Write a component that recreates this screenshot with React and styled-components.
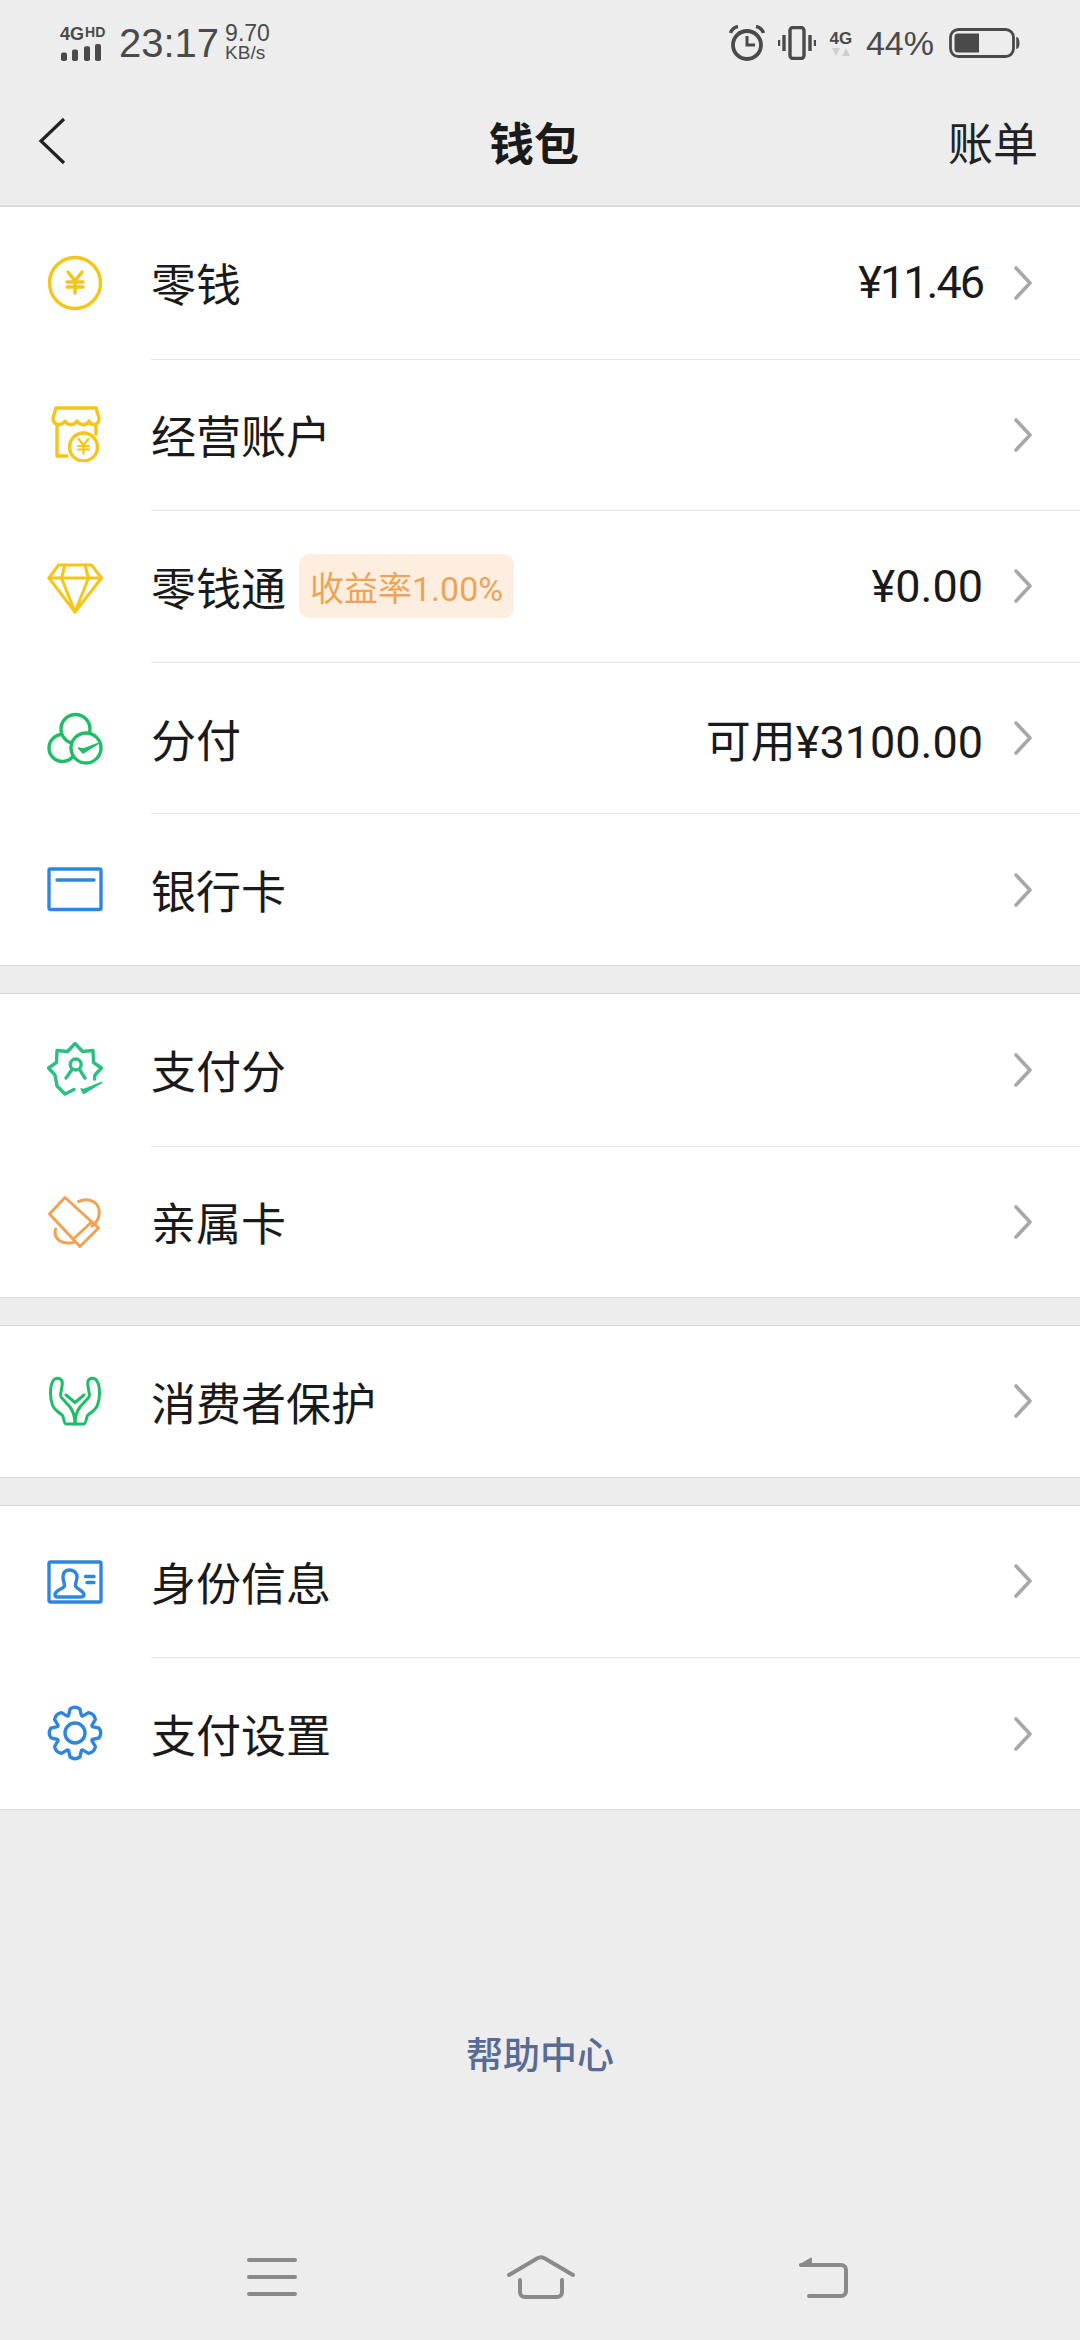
import React from 'react';
import styled, { createGlobalStyle } from 'styled-components';

const GlobalStyle = createGlobalStyle`
	html, body { margin: 0; padding: 0; background: #ededed; }
	body { font-family: 'Noto Sans CJK SC', 'Noto Sans', sans-serif; }
`;

const YELLOW = '#f5c518';
const GREEN = '#1fbd68';
const TEAL = '#2bc082';
const BLUE = '#2f86dc';
const ORANGE = '#f2a250';

const gearPath = () => {
	const teeth = 8;
	const cx = 28;
	const cy = 28;
	let d = '';
	for (let i = 0; i < teeth; i++) {
		const a = (i * Math.PI * 2) / teeth - Math.PI / 2;
		const pt = (r, off) => {
			const x = cx + r * Math.cos(a + off);
			const y = cy + r * Math.sin(a + off);
			return `${x.toFixed(1)} ${y.toFixed(1)}`;
		};
		d += `${i === 0 ? 'M' : 'L'}${pt(18.5, -0.36)} L${pt(24.5, -0.2)} Q${pt(27.5, 0)} ${pt(24.5, 0.2)} L${pt(18.5, 0.36)} `;
	}
	return d + 'Z';
};

const Icon = ({ color, stroke = 3.4, children }) => (
	<IconBox viewBox='0 0 56 56' fill='none' stroke={color} strokeWidth={stroke} strokeLinecap='round' strokeLinejoin='round'>
		{children}
	</IconBox>
);

const YenMark = ({ x, y, s = 1, w }) => (
	<path strokeWidth={w} d={`M${x - 7 * s} ${y - 10 * s} L${x} ${y - 1 * s} L${x + 7 * s} ${y - 10 * s} M${x - 8 * s} ${y} H${x + 8 * s} M${x - 8 * s} ${y + 5 * s} H${x + 8 * s} M${x} ${y} V${y + 11 * s}`} />
);

const icons = {
	coin: (
		<Icon color={YELLOW}>
			<circle cx='28' cy='28' r='25.5' />
			<YenMark x={28} y={27} />
		</Icon>
	),
	shop: (
		<Icon color={YELLOW}>
			<path d='M9 2 H49 L52 12 C52 20 44 20 42 15 C40 20 33 20 30 15 C27 20 21 20 18 15 C15 20 6 20 6 12 Z' />
			<path d='M10 20 V50 H20' />
			<path d='M49 19 V28' />
			<circle cx='36.5' cy='41' r='14' />
			<YenMark x={36.5} y={40} s={0.7} w={2.2} />
		</Icon>
	),
	diamond: (
		<Icon color={YELLOW} stroke={3}>
			<path d='M11.5 7 H44.5 L54.5 20 L28 54 L2 20 Z' />
			<path d='M2 20 H54.5 M18 7 L14.5 20 L28 54 L41.5 20 L38 7' />
		</Icon>
	),
	circles: (
		<Icon color={GREEN}>
			<circle cx='15.5' cy='38' r='13.5' fill='#fff' />
			<circle cx='28.5' cy='19' r='14.5' fill='#fff' />
			<circle cx='39' cy='38' r='15' fill='#fff' />
			<path d='M31.5 38 L36 43 L51 33.5 L36.5 39 Z' fill={GREEN} strokeWidth='1.5' />
		</Icon>
	),
	card: (
		<Icon color={BLUE}>
			<rect x='2' y='8' width='52' height='40.5' rx='1.5' />
			<path d='M10 19 H47' />
		</Icon>
	),
	badge: (
		<Icon color={TEAL}>
			<path d='M27 47.5 L18 52 L10 44 L8 33 L1.5 26 L9.5 20.5 L10 8.5 L20.5 9.5 L28 1.5 L35.5 9.5 L46 8.5 L46.5 20.5 L54.5 26 L48 33 L47.5 37' />
			<circle cx='28.7' cy='22.5' r='5.5' />
			<path d='M19 36 L25 27.5 M38 36 L32.5 27.5' />
			<path d='M34 47 L36.5 51.5 L54.5 40.5 L37 47.5 Z' fill={TEAL} strokeWidth='1.5' />
		</Icon>
	),
	family: (
		<Icon color={ORANGE} stroke={3}>
			<path d='M18 4.5 L2.5 21 L33 53.5 L51.5 35 Z' />
			<path d='M28 44.5 L44.5 29' />
			<path d='M31.5 8.5 C42 4 54 9 52 22 C51.5 26 49 30 45 33' />
			<path d='M8.5 36 C6 46 15 52 26.5 49.5' />
		</Icon>
	),
	hands: (
		<Icon color={GREEN} stroke={3}>
			<path d='M28 51 H19 C17 51 17 46 15.7 42.7 C12 39 7 37 5.5 32 C3 26 2.5 14 6 8 C8 4.5 13 4 15 8 C16 11 14.5 15 14 19 C13.5 21 13 22.5 14 24 L23 34 C26 38 28 43 28 51 Z' />
			<path d='M28 51 H37 C39 51 39 46 40.3 42.7 C44 39 49 37 50.5 32 C53 26 53.5 14 50 8 C48 4.5 43 4 41 8 C40 11 41.5 15 42 19 C42.5 21 43 22.5 42 24 L33 34 C30 38 28 43 28 51 Z' />
			<path d='M19 22 L28 29.5 L37 22' />
		</Icon>
	),
	idcard: (
		<Icon color={BLUE}>
			<rect x='2' y='9' width='52' height='40' rx='1.5' />
			<path d='M23 17 C18 17 16 20 16 24 C16 29 18 30 17.5 33 C15 37 8 37 8 42 C8 43.5 9 44 11 44 H33 C36 44 37 43.5 37 42 C37 37 30 37 28.5 33 C28 30 30 28 30 24 C30 20 27 17 23 17 Z' />
			<path d='M38.5 23.5 H47 M40 29.5 H47' />
		</Icon>
	),
	gear: (
		<Icon color={BLUE}>
			<path d={gearPath()} />
			<circle cx='28' cy='28' r='10' />
		</Icon>
	),
};

const Chevron = () => (
	<ChevronIcon viewBox='0 0 20 34' fill='none' stroke='#a8a8a8' strokeWidth='3.6' strokeLinecap='round' strokeLinejoin='round'>
		<path d='M3 2 L17 17 L3 32' />
	</ChevronIcon>
);

const sections = [
	[
		{ icon: 'coin', label: '零钱', value: '¥11.46', tight: true },
		{ icon: 'shop', label: '经营账户' },
		{ icon: 'diamond', label: '零钱通', tag: '收益率1.00%', value: '¥0.00' },
		{ icon: 'circles', label: '分付', value: '可用¥3100.00' },
		{ icon: 'card', label: '银行卡' },
	],
	[
		{ icon: 'badge', label: '支付分' },
		{ icon: 'family', label: '亲属卡' },
	],
	[{ icon: 'hands', label: '消费者保护' }],
	[
		{ icon: 'idcard', label: '身份信息' },
		{ icon: 'gear', label: '支付设置' },
	],
];

const App = () => (
	<Page>
		<GlobalStyle />
		<StatusBar>
			<StatusGroup>
				<SignalBlock>
					<NetworkLabel>4G<small>HD</small></NetworkLabel>
					<svg width='42' height='17' viewBox='0 0 42 20' preserveAspectRatio='none' fill='#4a4a4a'>
						<rect x='1' y='10' width='6' height='10' rx='2' />
						<rect x='12' y='6.5' width='6' height='13.5' rx='2' />
						<rect x='24' y='2.5' width='6' height='17.5' rx='2' />
						<rect x='35' y='0' width='6' height='20' rx='2' />
					</svg>
				</SignalBlock>
				<Time>23:17</Time>
				<Speed>
					<span>9.70</span>
					<small>KB/s</small>
				</Speed>
			</StatusGroup>
			<StatusGroup>
				<svg width='36' height='36' viewBox='0 0 36 36' fill='none' stroke='#4a4a4a' strokeWidth='3.8'>
					<circle cx='18' cy='20' r='14' />
					<path d='M18 11 V20 H26' strokeWidth='3' />
					<path d='M1.5 8 C3 4 6 2 9 1.5 M34.5 8 C33 4 30 2 27 1.5' strokeWidth='3.4' />
				</svg>
				<VibrateIcon width='38' height='34' viewBox='0 0 38 34' fill='none' stroke='#4a4a4a'>
					<rect x='12' y='1.5' width='14' height='31' rx='3' strokeWidth='3.4' />
					<path d='M6 9 V25 M32 9 V25' strokeWidth='3.4' />
					<path d='M1 14 V20 M37 14 V20' strokeWidth='2.4' />
				</VibrateIcon>
				<MobileData>
					<span>4G</span>
					<svg width='18' height='9' viewBox='0 0 18 9' fill='#cfcfcf'>
						<path d='M0 0 H8 L4 8 Z M10 8 H18 L14 0 Z' />
					</svg>
				</MobileData>
				<Battery>44%</Battery>
				<svg width='71' height='30' viewBox='0 0 71 30' fill='none'>
					<rect x='1.5' y='1.5' width='63' height='27' rx='8' stroke='#4a4a4a' strokeWidth='2.8' />
					<path d='M9 5.5 H30 V24.5 H9 C6.5 24.5 5.5 23.5 5.5 21 V9 C5.5 6.5 6.5 5.5 9 5.5 Z' fill='#4a4a4a' />
					<path d='M68 10 C70 11 70.5 19 68 20 Z' fill='#4a4a4a' stroke='#4a4a4a' strokeWidth='1.5' />
				</svg>
			</StatusGroup>
		</StatusBar>
		<NavBar>
			<svg width='30' height='48' viewBox='0 0 30 48' fill='none' stroke='#222' strokeWidth='3.2'>
				<path d='M26 2 L3 24 L26 46' />
			</svg>
			<NavTitle>钱包</NavTitle>
			<NavAction>账单</NavAction>
		</NavBar>
		{sections.map((rows, i) => (
			<Section key={i}>
				{rows.map(row => (
					<Row key={row.label}>
						{icons[row.icon]}
						<RowBody>
							<Label>{row.label}</Label>
							{row.tag && <Tag>{row.tag}</Tag>}
							{row.value && <Value $tight={row.tight}>{row.value}</Value>}
							<Chevron />
						</RowBody>
					</Row>
				))}
			</Section>
		))}
		<Footer>
			<HelpLink>帮助中心</HelpLink>
		</Footer>
		<SoftKeys>
			<svg width='52' height='40' viewBox='0 0 52 40' fill='none' stroke='#8a8a8a' strokeWidth='4' strokeLinecap='round'>
				<path d='M3 3 H49 M3 20 H49 M3 37 H49' />
			</svg>
			<svg width='70' height='44' viewBox='0 0 70 44' fill='none' stroke='#8a8a8a' strokeWidth='4' strokeLinecap='round' strokeLinejoin='round'>
				<path d='M3 20 L31 3.5 C33.5 2 36.5 2 39 3.5 L67 20' />
				<path d='M14 25 V37 C14 40 16 42 19 42 H51 C54 42 56 40 56 37 V25' />
			</svg>
			<svg width='52' height='42' viewBox='0 0 52 42' fill='none' stroke='#8a8a8a' strokeWidth='4' strokeLinecap='round' strokeLinejoin='round'>
				<path d='M4 9 H44 C47 9 49 11 49 14 V35 C49 38 47 40 44 40 H12' />
				<path d='M3 9 L14 2.5 V9 Z' fill='#8a8a8a' strokeWidth='2' />
			</svg>
		</SoftKeys>
	</Page>
);

const Page = styled.div`
	width: 1080px;
	height: 2340px;
	display: flex;
	flex-direction: column;
	background: #ededed;
	overflow: hidden;
`;
const StatusBar = styled.div`
	height: 84px;
	box-sizing: border-box;
	padding: 2px 60px 0 60px;
	display: flex;
	align-items: center;
	justify-content: space-between;
	color: #4a4a4a;
	font-family: 'Liberation Sans', sans-serif;
`;
const StatusGroup = styled.div`
	display: flex;
	align-items: center;
`;
const SignalBlock = styled.div`
	display: flex;
	flex-direction: column;
	width: 46px;
	margin-right: 13px;
`;
const NetworkLabel = styled.div`
	font-size: 18px;
	line-height: 15px;
	margin-bottom: 2px;
	font-weight: 700;
	white-space: nowrap;
	small {
		font-size: 14px;
		vertical-align: 3px;
		margin-left: 1px;
	}
`;
const Time = styled.span`
	font-size: 40px;
	line-height: 44px;
`;
const Speed = styled.div`
	display: flex;
	flex-direction: column;
	margin-left: 6px;
	font-size: 23px;
	line-height: 19px;
	small {
		font-size: 19px;
	}
`;
const VibrateIcon = styled.svg`
	margin: 0 13px;
`;
const MobileData = styled.div`
	width: 24px;
	display: flex;
	flex-direction: column;
	align-items: center;
	font-size: 17px;
	line-height: 18px;
	font-weight: 700;
	margin-right: 13px;
`;
const Battery = styled.span`
	font-size: 34px;
	margin-right: 15px;
`;
const NavBar = styled.div`
	height: 123px;
	box-sizing: border-box;
	padding: 0 42px 7px 38px;
	display: grid;
	grid-template-columns: 451px auto 1fr;
	align-items: center;
	border-bottom: 2px solid #dcdcdc;
`;
const NavTitle = styled.div`
	font-size: 45px;
	font-weight: 700;
	color: #1a1a1a;
`;
const NavAction = styled.div`
	font-size: 45px;
	color: #222;
	text-align: right;
`;
const Section = styled.div`
	background: #fff;
	border-bottom: 1px solid #d9d9d9;
	& + & {
		margin-top: 27px;
		border-top: 1px solid #d9d9d9;
	}
`;
const Row = styled.div`
	height: 151.6px;
	padding-left: 47px;
	display: flex;
	align-items: stretch;
	&:only-child {
		height: 150.5px;
	}
`;
const IconBox = styled.svg`
	width: 56px;
	height: 56px;
	align-self: center;
	flex: none;
`;
const RowBody = styled.div`
	flex: 1;
	margin-left: 48px;
	padding-right: 47px;
	display: flex;
	align-items: center;
	${Row} + ${Row} & {
		border-top: 1px solid #e6e6e6;
	}
`;
const Label = styled.span`
	font-size: 45px;
	color: #1a1a1a;
`;
const Tag = styled.span`
	margin-left: 13px;
	padding: 0 11px;
	height: 64px;
	display: flex;
	align-items: center;
	border-radius: 10px;
	background: #feeee0;
	color: #eda456;
	font-size: 34px;
	font-family: 'Roboto', 'Noto Sans CJK SC', sans-serif;
`;
const Value = styled.span`
	margin-left: auto;
	font-size: 45px;
	letter-spacing: ${({ $tight }) => ($tight ? '-2px' : '0')};
	color: #1a1a1a;
	font-family: 'Roboto', 'Noto Sans CJK SC', sans-serif;
`;
const ChevronIcon = styled.svg`
	width: 20px;
	height: 34px;
	margin-left: auto;
	flex: none;
	${Value} + & {
		margin-left: 30px;
	}
`;
const Footer = styled.div`
	flex: 1;
	padding-top: 213px;
	display: flex;
	justify-content: center;
`;
const HelpLink = styled.span`
	font-size: 37px;
	line-height: 60px;
	font-weight: 500;
	color: #576b95;
`;
const SoftKeys = styled.div`
	height: 126px;
	padding-left: 246px;
	display: grid;
	grid-template-columns: 260px 291px 52px;
	align-items: center;
`;

export default App;
